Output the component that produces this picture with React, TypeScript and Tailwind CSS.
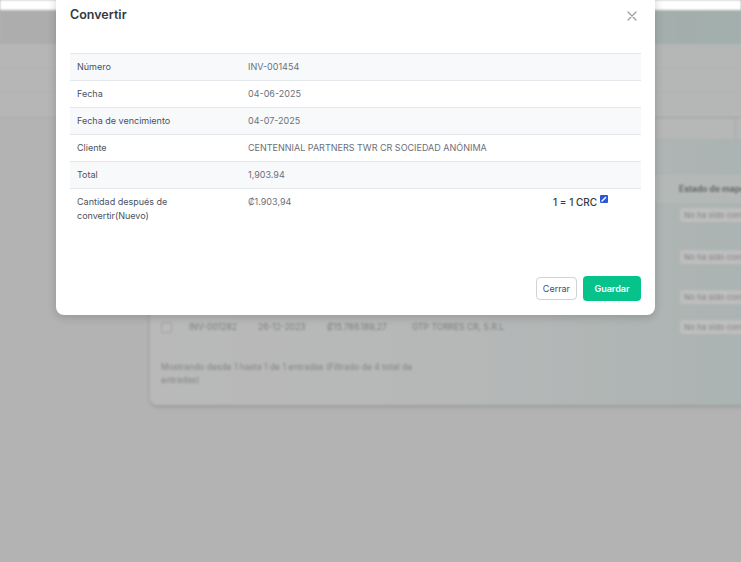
import React from "react";

const rows = [
  { label: "Número", value: "INV-001454", striped: true },
  { label: "Fecha", value: "04-06-2025", striped: false },
  { label: "Fecha de vencimiento", value: "04-07-2025", striped: true },
  { label: "Cliente", value: "CENTENNIAL PARTNERS TWR CR SOCIEDAD ANÓNIMA", striped: false },
  { label: "Total", value: "1,903.94", striped: true },
];

function Badge() {
  return (
    <div className="rounded-[2px] bg-[#bdbebd] px-[4px] py-[2px] text-[8px] leading-[10px] text-[#838585] whitespace-nowrap">
      No ha sido convertido
    </div>
  );
}

function BgRow({ h, children }: { h: number; children?: React.ReactNode }) {
  return (
    <div className="flex items-center" style={{ height: h }}>
      {children}
    </div>
  );
}

export default function App() {
  return (
    <div
      className="relative w-[741px] h-[562px] overflow-hidden bg-[#b3b3b3]"
      style={{ fontFamily: "Inter, 'Noto Sans', 'Liberation Sans', sans-serif" }}
    >
      {/* blurred background page */}
      <div className="absolute inset-0 blur-[0.8px]">
        <div className="h-[10px] bg-white" />
        <div className="h-[34px] bg-gradient-to-r from-[#adadad] via-[#acadad] to-[#a2afac]" />
        <div className="h-[74px] bg-gradient-to-r from-[#b6b6b6] to-[#b4b7b6] border-b border-[#a9a9a9]">
          <div className="h-[24px] border-b border-[#b2b2b2]" />
          <div className="h-[25px] border-b border-[#b2b2b2]" />
        </div>
        <div className="ml-[150px] w-[640px] h-[287px] rounded-l-[8px] bg-gradient-to-r from-[#b9b9b9] via-[#b6b8b8] to-[#a9b3b1] shadow-[0_2px_4px_rgba(0,0,0,0.15)]">
          <div className="flex h-[57px] items-start justify-end gap-[1px] pl-[505px]">
            <div className="h-[22px] w-[80px] border border-[#b0b1b1] bg-[#b6b7b7]" />
            <div className="h-[22px] flex-1 border border-[#b0b1b1] bg-[#b6b7b7]" />
          </div>
          <div className="flex h-[28px] items-center bg-[#b4b9b8] pl-[529px] text-[8.5px] font-bold text-[#666a69] whitespace-nowrap">
            Estado de mapeo
          </div>
          <div className="text-[8.5px] text-[#7c7e7d]">
            <BgRow h={24}>
              <div className="ml-[530px]"><Badge /></div>
            </BgRow>
            <BgRow h={60}>
              <div className="ml-[530px]"><Badge /></div>
            </BgRow>
            <BgRow h={20}>
              <div className="ml-[530px]"><Badge /></div>
            </BgRow>
            <div className="flex h-[40px] items-center">
              <div className="ml-[11px] w-[28px]">
                <div className="h-[11px] w-[11px] rounded-[2px] border border-[#a3a3a3] bg-[#bababa]" />
              </div>
              <div className="w-[69px]">INV-001282</div>
              <div className="w-[69px]">26-12-2023</div>
              <div className="w-[85px]">₡15.786.189,27</div>
              <div className="w-[268px]">GTP TORRES CR, S.R.L</div>
              <Badge />
            </div>
            <div className="ml-[11px] mt-[14px] w-[270px] text-[8.5px] leading-[13px] text-[#838584]">
              Mostrando desde 1 hasta 1 de 1 entradas (Filtrado de 4 total de entradas)
            </div>
          </div>
        </div>
      </div>

      {/* modal */}
      <div className="absolute left-[56px] top-[-8px] w-[599px] rounded-[8px] bg-white shadow-[0_2px_10px_rgba(0,0,0,0.18)]">
        <div className="flex h-[46px] items-center justify-between px-[14px]">
          <div className="pt-[1px] text-[12.5px] font-semibold text-[#343a40]">Convertir</div>
          <svg width="10" height="10" viewBox="0 0 10 10" className="mr-[4px] mt-[1px]">
            <path d="M1 1 L9 9 M9 1 L1 9" stroke="#9aa0a6" strokeWidth="1.2" strokeLinecap="round" />
          </svg>
        </div>
        <div className="px-[14px] pt-[15px] pb-[14px]">
          <div className="border-t border-[#e3e6ea]">
            {rows.map((r) => (
              <div
                key={r.label}
                className={`flex h-[27px] items-center border-b border-[#e3e6ea] text-[9px] ${r.striped ? "bg-[#f8f9fb]" : "bg-white"}`}
              >
                <div className="w-[171px] pl-[7px] text-[#4b5160]">{r.label}</div>
                <div className="flex-1 pl-[7px] text-[#6b7079]">{r.value}</div>
              </div>
            ))}
            <div className="flex pt-[6px] pb-[6px] text-[9px] leading-[13.5px]">
              <div className="w-[171px] pl-[7px] pr-[20px] text-[#4b5160]">
                Cantidad después de convertir(Nuevo)
              </div>
              <div className="flex-1 pl-[7px] text-[#6b7079]">₡1.903,94</div>
              <div className="flex w-[88px] items-start pt-[1px]">
                <span className="text-[10px] font-medium text-[#343a40]">1 = 1 CRC</span>
                <svg width="8" height="8" viewBox="0 0 8 8" className="ml-[3px] mt-[-1px]">
                  <rect x="0" y="0" width="8" height="8" rx="1" fill="#2a57d8" />
                  <path d="M2 6 L5.6 2.4" stroke="white" strokeWidth="1.4" strokeLinecap="round" />
                  <path d="M1.6 6.4 L2.2 5.2 L2.8 5.8 Z" fill="white" />
                </svg>
              </div>
            </div>
          </div>
          <div className="flex items-center justify-end gap-[6px] pt-[48px]">
            <button className="h-[23px] rounded-[4px] border border-[#ced4da] bg-white px-[6px] text-[9px] text-[#495057]">
              Cerrar
            </button>
            <button className="h-[25px] w-[58px] rounded-[4px] bg-[#05c38b] text-[9px] font-semibold text-white">
              Guardar
            </button>
          </div>
        </div>
      </div>
    </div>
  );
}
